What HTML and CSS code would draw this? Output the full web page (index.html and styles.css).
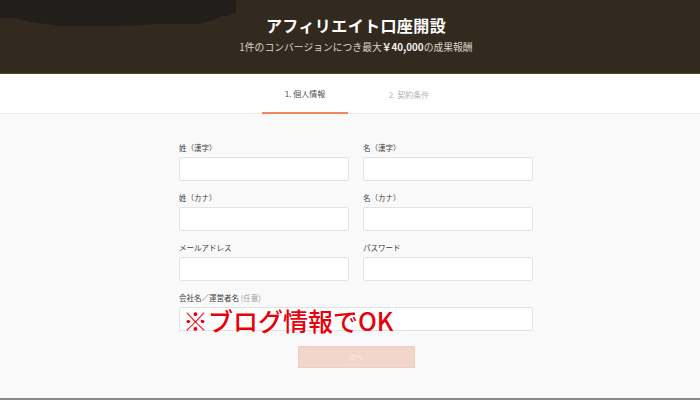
FILE: index.html
```html
<!DOCTYPE html>
<html lang="ja">
<head>
<meta charset="utf-8">
<link rel="stylesheet" href="styles.css">
</head>
<body>
<header class="hero">
  <svg class="hero-shade" width="240" height="26" viewBox="0 0 240 26" aria-hidden="true">
    <path d="M0 0 H236 V12 L232 14 L228 16 L222 16 L214 20 L205 22 L200 24 L160 24 L120 26 L60 26 L30 22 L15 18 L0 18 Z" fill="#221e1c"/>
  </svg>
  <h1 class="hero-title">アフィリエイト口座開設</h1>
  <p class="hero-sub">1件のコンバージョンにつき最大<b>￥40,000</b>の成果報酬</p>
</header>
<nav class="steps">
  <div class="step active">1. 個人情報</div>
  <div class="step">2. 契約条件</div>
</nav>
<main class="form-area">
  <form class="form">
    <div class="field">
      <label class="label">姓（漢字）</label>
      <div class="input"></div>
    </div>
    <div class="field">
      <label class="label">名（漢字）</label>
      <div class="input"></div>
    </div>
    <div class="field">
      <label class="label">姓（カナ）</label>
      <div class="input"></div>
    </div>
    <div class="field">
      <label class="label">名（カナ）</label>
      <div class="input"></div>
    </div>
    <div class="field">
      <label class="label">メールアドレス</label>
      <div class="input"></div>
    </div>
    <div class="field">
      <label class="label">パスワード</label>
      <div class="input"></div>
    </div>
    <div class="field wide">
      <label class="label">会社名／運営者名 <span class="opt">(任意)</span></label>
      <div class="input note-holder">
        <span class="note">※ブログ情報でOK</span>
      </div>
    </div>
    <div class="actions">
      <button type="button" class="next">次へ</button>
    </div>
  </form>
</main>
</body>
</html>
```

FILE: styles.css
```css
* { box-sizing: border-box; }
html, body { margin: 0; padding: 0; }
body {
  width: 700px;
  height: 400px;
  overflow: hidden;
  font-family: "Noto Sans CJK JP", "Noto Sans", sans-serif;
  background: #f9f9f9;
  display: flex;
  flex-direction: column;
}
.hero {
  position: relative;
  height: 74px;
  background: #332a1f;
  border-bottom: 1px solid #4e4a33;
  display: flex;
  flex-direction: column;
  align-items: center;
  padding-top: 14px;
  padding-left: 12px;
}
.hero-shade {
  position: absolute;
  left: 0;
  top: 0;
}
.hero-title {
  position: relative;
  margin: 0;
  color: #ffffff;
  font-size: 16px;
  font-weight: 700;
  line-height: 22px;
  letter-spacing: 0.4px;
}
.hero-sub {
  position: relative;
  margin: 4px 0 0;
  color: #d9d5cd;
  font-size: 9.8px;
  line-height: 14px;
}
.hero-sub b { color: #f2f0ec; font-weight: 700; }
.steps {
  height: 40px;
  background: #ffffff;
  border-bottom: 1px solid #ececec;
  display: flex;
  justify-content: center;
  gap: 18px;
  padding-left: 14px;
}
.step {
  width: 86px;
  display: flex;
  align-items: center;
  justify-content: center;
  font-size: 8px;
  color: #b4b4b4;
  padding-top: 1px;
}
.step.active {
  color: #505050;
  border-bottom: 2px solid #f0855c;
  margin-bottom: -1px;
}
.form-area {
  flex: 1;
  border-bottom: 2px solid #8a8a8a;
  display: flex;
  justify-content: center;
  padding-left: 12px;
  padding-top: 29px;
}
.form {
  width: 354px;
  display: grid;
  grid-template-columns: 170px 170px;
  column-gap: 14px;
  row-gap: 12px;
  align-content: start;
}
.field {
  display: flex;
  flex-direction: column;
  gap: 4px;
}
.field.wide { grid-column: 1 / -1; }
.label {
  font-size: 7.5px;
  line-height: 10px;
  color: #3c3c3c;
}
.opt { color: #a0a0a0; }
.input {
  height: 24px;
  background: #ffffff;
  border: 1px solid #e3e3e3;
  border-radius: 2px;
}
.note-holder { position: relative; }
.note {
  position: absolute;
  left: 3px;
  top: -3px;
  color: #e8000b;
  font-size: 25px;
  line-height: 30px;
  font-weight: 500;
  white-space: nowrap;
}
.actions {
  grid-column: 1 / -1;
  display: flex;
  justify-content: center;
  padding-top: 3px;
}
.next {
  width: 117px;
  height: 22px;
  background: #f2d6cb;
  border: 1px solid #f0cdbf;
  border-radius: 0;
  color: #fbeee8;
  font-family: inherit;
  font-size: 7px;
  padding: 0;
}
```
